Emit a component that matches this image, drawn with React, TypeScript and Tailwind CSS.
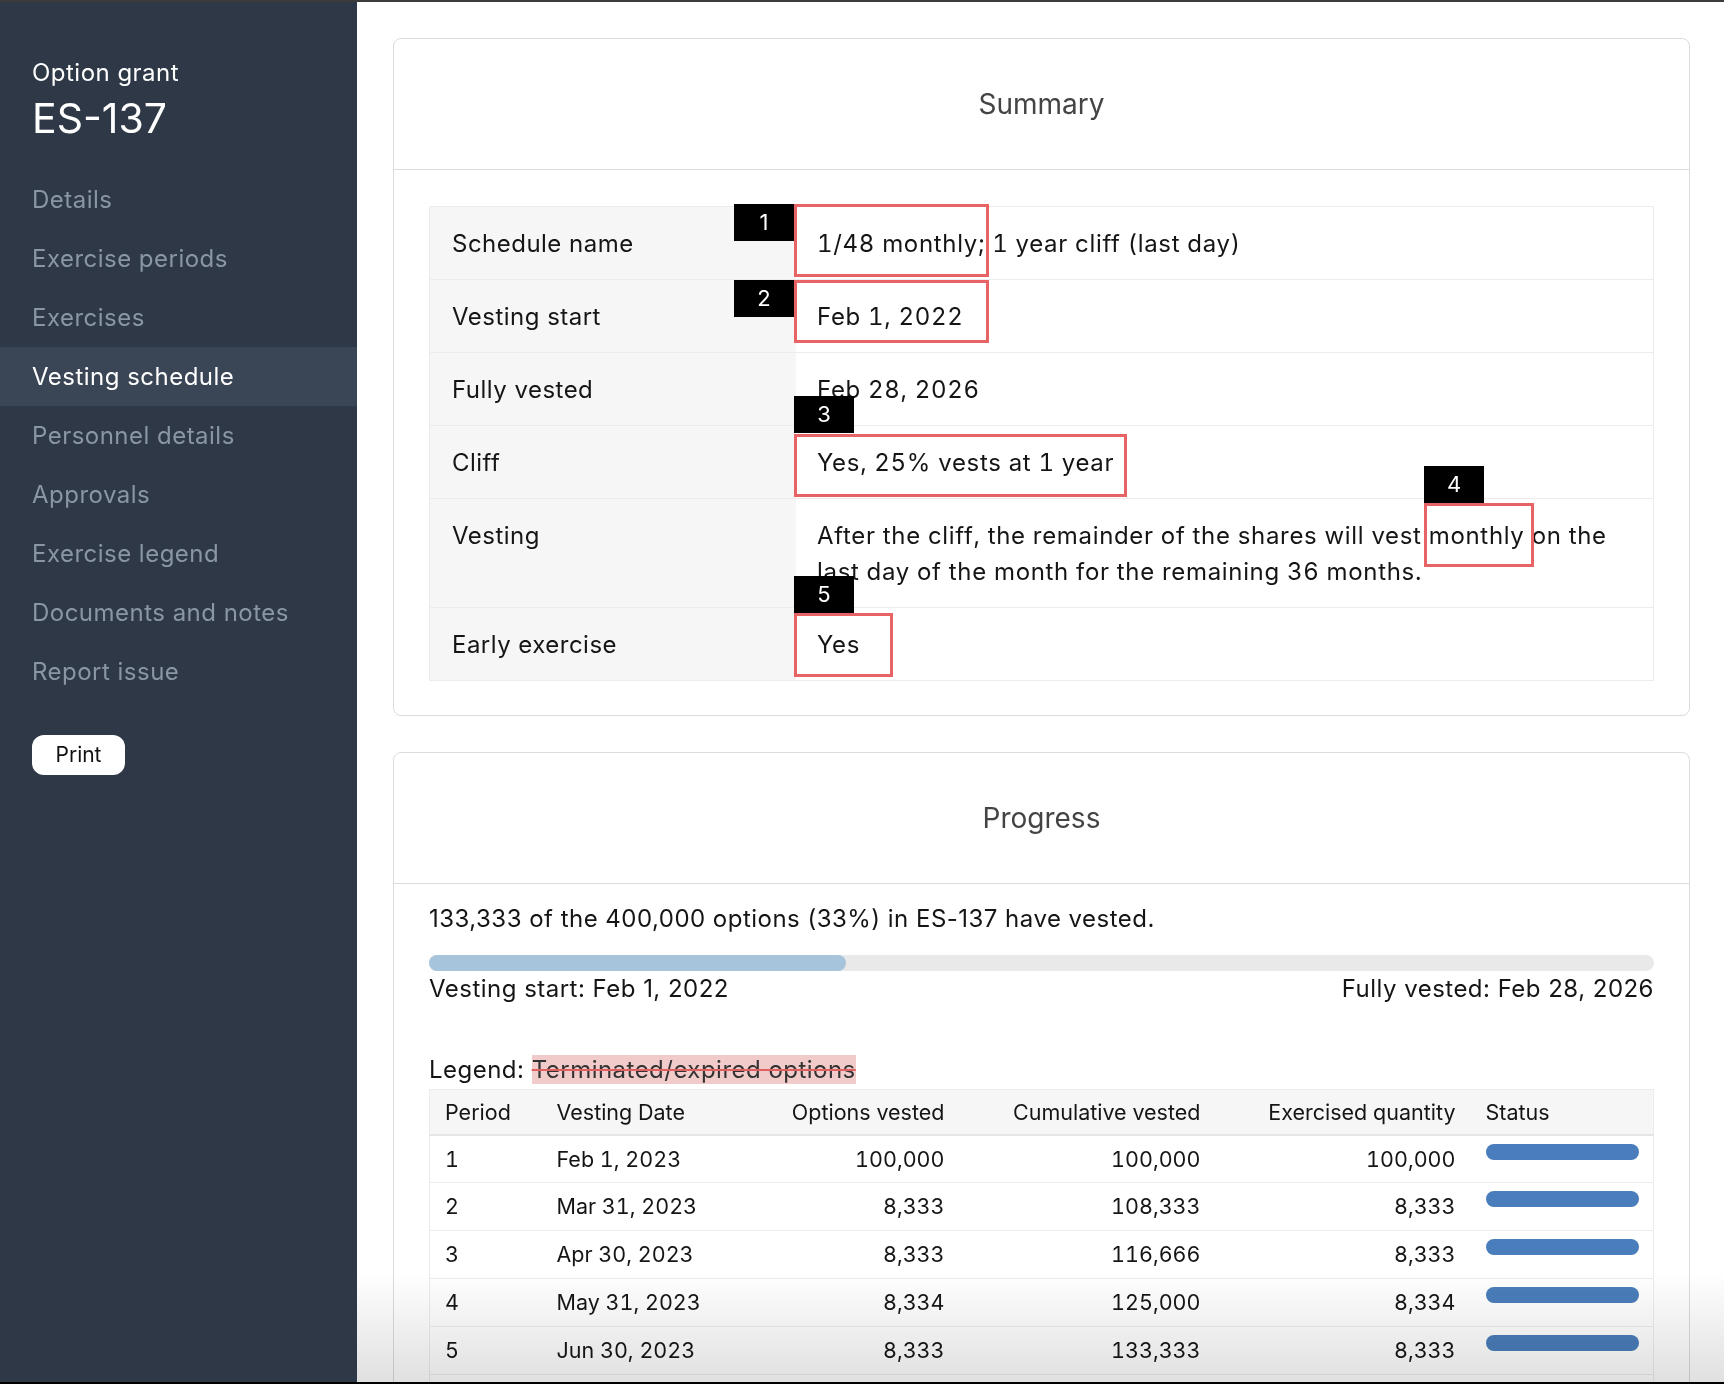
import React from 'react';

const navItems = [
  'Details',
  'Exercise periods',
  'Exercises',
  'Vesting schedule',
  'Personnel details',
  'Approvals',
  'Exercise legend',
  'Documents and notes',
  'Report issue',
];

const summaryRows: { label: string; value: React.ReactNode }[] = [
  { label: 'Schedule name', value: '1/48 monthly; 1 year cliff (last day)' },
  { label: 'Vesting start', value: 'Feb 1, 2022' },
  { label: 'Fully vested', value: 'Feb 28, 2026' },
  { label: 'Cliff', value: 'Yes, 25% vests at 1 year' },
  {
    label: 'Vesting',
    value:
      'After the cliff, the remainder of the shares will vest monthly on the last day of the month for the remaining 36 months.',
  },
  { label: 'Early exercise', value: 'Yes' },
];

const periods = [
  ['1', 'Feb 1, 2023', '100,000', '100,000', '100,000'],
  ['2', 'Mar 31, 2023', '8,333', '108,333', '8,333'],
  ['3', 'Apr 30, 2023', '8,333', '116,666', '8,333'],
  ['4', 'May 31, 2023', '8,334', '125,000', '8,334'],
  ['5', 'Jun 30, 2023', '8,333', '133,333', '8,333'],
  ['6', 'Jul 31, 2023', '8,333', '141,666', '8,333'],
  ['7', 'Aug 31, 2023', '8,334', '150,000', '8,334'],
];

// annotation overlays drawn over the summary table
const marks = [
  { n: '1', tag: 'left-[734px] top-[204px]', box: 'left-[794px] top-[204px] w-[195px] h-[73px]' },
  { n: '2', tag: 'left-[734px] top-[280px]', box: 'left-[794px] top-[280px] w-[195px] h-[63px]' },
  { n: '3', tag: 'left-[794px] top-[396px]', box: 'left-[794px] top-[434px] w-[333px] h-[63px]' },
  { n: '4', tag: 'left-[1424px] top-[466px]', box: 'left-[1424px] top-[503px] w-[110px] h-[64px]' },
  { n: '5', tag: 'left-[794px] top-[576px]', box: 'left-[794px] top-[613px] w-[99px] h-[64px]' },
];

function Card({ title, children }: { title: string; children: React.ReactNode }) {
  return (
    <div className="rounded-lg border border-[#dcdcdc] bg-white">
      <div className="h-[131px] flex items-center justify-center border-b border-[#dcdcdc] text-[28px] text-[#444]">
        {title}
      </div>
      {children}
    </div>
  );
}

export default function App() {
  return (
    <div className="relative h-[1384px] overflow-hidden bg-white font-['Inter','Noto_Sans',sans-serif] text-[#151515]">
      <div className="h-[2px] bg-[#3c3c3c]" />
      <div className="flex h-[1382px]">
        {/* Sidebar */}
        <aside className="w-[357px] shrink-0 bg-[#2f3846] pt-[56px] tracking-[0.03em]">
          <div className="px-8 text-[24px] leading-[30px] text-white">Option grant</div>
          <div className="px-8 mt-[5px] text-[41px] leading-[50px] tracking-normal text-white">ES-137</div>
          <nav className="mt-[27px]">
            {navItems.map((item) => (
              <div
                key={item}
                className={`h-[59px] flex items-center px-8 text-[24px] ${
                  item === 'Vesting schedule' ? 'bg-[#3a4555] text-white' : 'text-[#8a96a5]'
                }`}
              >
                {item}
              </div>
            ))}
          </nav>
          <button className="ml-8 mt-[34px] h-[40px] w-[93px] rounded-[12px] bg-white text-[21px] tracking-normal text-[#111]">
            Print
          </button>
        </aside>

        {/* Main */}
        <main className="flex-1 px-9 pt-9 flex flex-col gap-9">
          <Card title="Summary">
            <div className="px-[35px] pt-[36px] pb-[34px]">
              <div className="border border-[#ececec] text-[24px] leading-[36px] tracking-[0.02em]">
                {summaryRows.map((row, i) => (
                  <div key={row.label} className={`flex ${i > 0 ? 'border-t border-[#ececec]' : ''}`}>
                    <div className="w-[366px] shrink-0 bg-[#f6f6f6] pl-[22px] pt-[19px] pb-[17px]">{row.label}</div>
                    <div className="flex-1 pl-[21px] pr-[24px] pt-[19px] pb-[17px] tabular-nums tracking-[0.028em]">
                      {row.value}
                    </div>
                  </div>
                ))}
              </div>
            </div>
          </Card>

          <Card title="Progress">
            <div className="px-[35px] pt-[17px]">
              <div className="text-[24px] leading-[36px] tracking-[0.02em]">
                133,333 of the 400,000 options (33%) in ES-137 have vested.
              </div>
              <div className="mt-[18px] h-4 rounded-full bg-[#e9e9e9]">
                <div className="h-4 w-[34%] rounded-full bg-[#a6c4db]" />
              </div>
              <div className="flex justify-between text-[24px] leading-[36px] tracking-[0.02em]">
                <span>Vesting start: Feb 1, 2022</span>
                <span>Fully vested: Feb 28, 2026</span>
              </div>
              <div className="mt-[45px] text-[24px] leading-[36px] tracking-[0.02em]">
                Legend:{' '}
                <span className="bg-[#f1caca] text-[#333] line-through decoration-[#e06060]">
                  Terminated/expired options
                </span>
              </div>
              <table className="mt-px w-full table-fixed border border-[#ececec] text-[21.5px] tabular-nums">
                <colgroup>
                  <col className="w-[112px]" />
                  <col className="w-[180px]" />
                  <col className="w-[238px]" />
                  <col className="w-[256px]" />
                  <col className="w-[255px]" />
                  <col className="w-[183px]" />
                </colgroup>
                <thead>
                  <tr className="h-[45px] bg-[#f6f6f6] border-b-2 border-[#e6e6e6]">
                    <th className="px-[15px] text-left font-normal">Period</th>
                    <th className="px-[15px] text-left font-normal">Vesting Date</th>
                    <th className="px-[15px] text-right font-normal">Options vested</th>
                    <th className="px-[15px] text-right font-normal">Cumulative vested</th>
                    <th className="px-[15px] text-right font-normal">Exercised quantity</th>
                    <th className="px-[15px] text-left font-normal">Status</th>
                  </tr>
                </thead>
                <tbody>
                  {periods.map((p) => (
                    <tr key={p[0]} className="h-[48px] border-t border-[#ececec]">
                      <td className="px-[15px]">{p[0]}</td>
                      <td className="px-[15px]">{p[1]}</td>
                      <td className="px-[15px] text-right">{p[2]}</td>
                      <td className="px-[15px] text-right">{p[3]}</td>
                      <td className="px-[15px] text-right">{p[4]}</td>
                      <td className="pl-[15px] pr-[14px] align-top pt-2">
                        <div className="h-4 rounded-full bg-[#4a7dbb]" />
                      </td>
                    </tr>
                  ))}
                </tbody>
              </table>
            </div>
          </Card>
        </main>
      </div>

      {/* Annotation overlays */}
      {marks.map((m) => (
        <React.Fragment key={m.n}>
          <div className={`absolute ${m.tag} w-[60px] h-[37px] bg-black text-white text-[22px] flex items-center justify-center`}>
            {m.n}
          </div>
          <div className={`absolute ${m.box} border-[3px] border-[#e86464]`} />
        </React.Fragment>
      ))}

      {/* bottom shade + edge */}
      <div className="absolute left-[357px] right-0 bottom-[2px] h-[110px] bg-gradient-to-b from-transparent to-[#e0e0e0] mix-blend-multiply" />
      <div className="absolute left-0 right-0 bottom-0 h-[2px] bg-black" />
    </div>
  );
}
